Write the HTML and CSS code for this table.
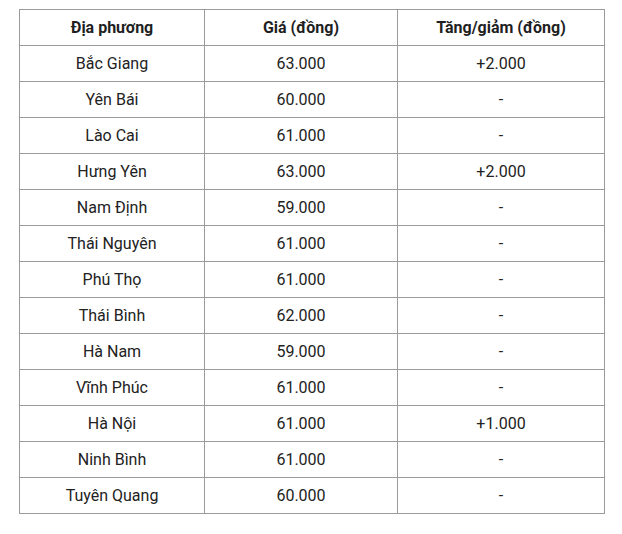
FILE: index.html
```html
<!DOCTYPE html>
<html lang="vi">
<head>
<meta charset="utf-8">
<link rel="stylesheet" href="styles.css">
</head>
<body>
<div class="wrap">
<table class="price-table">
<colgroup><col class="c1"><col class="c2"><col class="c3"></colgroup>
<thead>
<tr><th>Địa phương</th><th>Giá (đồng)</th><th>Tăng/giảm (đồng)</th></tr>
</thead>
<tbody>
<tr><td>Bắc Giang</td><td>63.000</td><td>+2.000</td></tr>
<tr><td>Yên Bái</td><td>60.000</td><td>-</td></tr>
<tr><td>Lào Cai</td><td>61.000</td><td>-</td></tr>
<tr><td>Hưng Yên</td><td>63.000</td><td>+2.000</td></tr>
<tr><td>Nam Định</td><td>59.000</td><td>-</td></tr>
<tr><td>Thái Nguyên</td><td>61.000</td><td>-</td></tr>
<tr><td>Phú Thọ</td><td>61.000</td><td>-</td></tr>
<tr><td>Thái Bình</td><td>62.000</td><td>-</td></tr>
<tr><td>Hà Nam</td><td>59.000</td><td>-</td></tr>
<tr><td>Vĩnh Phúc</td><td>61.000</td><td>-</td></tr>
<tr><td>Hà Nội</td><td>61.000</td><td>+1.000</td></tr>
<tr><td>Ninh Bình</td><td>61.000</td><td>-</td></tr>
<tr><td>Tuyên Quang</td><td>60.000</td><td>-</td></tr>
</tbody>
</table>
</div>
</body>
</html>
```
FILE: styles.css
```css
html, body {
  margin: 0;
  padding: 0;
  background: #ffffff;
}
body {
  font-family: Roboto, "Liberation Sans", Arial, sans-serif;
  color: #222222;
  overflow: hidden;
}
.wrap {
  padding: 9px 0 0 19px;
}
.price-table {
  border-collapse: collapse;
  table-layout: fixed;
  width: 585px;
  font-size: 16px;
}
.c1 { width: 185px; }
.c2 { width: 193px; }
.c3 { width: 207px; }
.price-table th,
.price-table td {
  border: 1px solid #9b9b9b;
  height: 36px;
  padding: 0 8px;
  text-align: center;
  vertical-align: middle;
  line-height: 20px;
  box-sizing: border-box;
}
.price-table th {
  font-weight: 700;
  color: #1f1f1f;
}
```
